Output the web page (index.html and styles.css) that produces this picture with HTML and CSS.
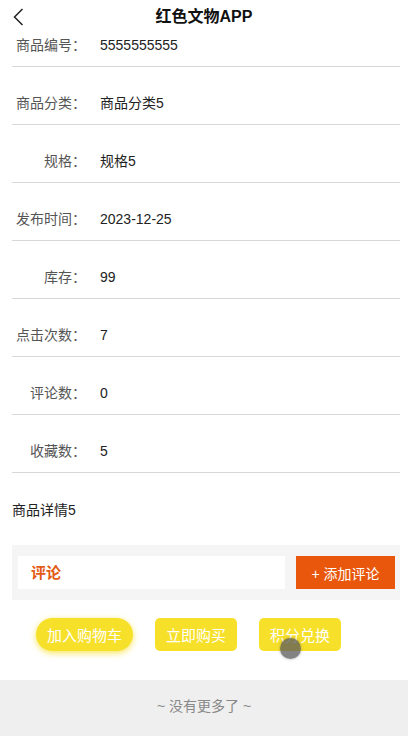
FILE: index.html
```html
<!DOCTYPE html>
<html lang="zh">
<head>
    <meta charset="UTF-8">
    <meta name="viewport" content="width=device-width, initial-scale=1.0">
    <title>红色文物APP</title>
    <link rel="stylesheet" href="styles.css">
</head>
<body>

    <div class="page">
        <div class="header">
            <svg class="back" width="12" height="18" viewBox="0 0 12 18">
                <path d="M9.5 1 L1.5 9 L9.5 17" fill="none" stroke="#222" stroke-width="1.5"/>
            </svg>
            <h1>红色文物APP</h1>
        </div>

        <div class="content">
            <div class="info-list">
                <div class="info-row"><span class="label">商品编号：</span><span class="value">5555555555</span></div>
                <div class="info-row"><span class="label">商品分类：</span><span class="value">商品分类5</span></div>
                <div class="info-row"><span class="label">规格：</span><span class="value">规格5</span></div>
                <div class="info-row"><span class="label">发布时间：</span><span class="value">2023-12-25</span></div>
                <div class="info-row"><span class="label">库存：</span><span class="value">99</span></div>
                <div class="info-row"><span class="label">点击次数：</span><span class="value">7</span></div>
                <div class="info-row"><span class="label">评论数：</span><span class="value">0</span></div>
                <div class="info-row"><span class="label">收藏数：</span><span class="value">5</span></div>
            </div>

            <div class="detail">商品详情5</div>

            <div class="comment-bar">
                <div class="comment-title">评论</div>
                <button class="add-comment">+ 添加评论</button>
            </div>

            <div class="actions">
                <button class="btn btn-cart">加入购物车</button>
                <button class="btn">立即购买</button>
                <button class="btn">积分兑换</button>
            </div>
        </div>

        <div class="footer">~ 没有更多了 ~</div>

        <div class="touch-dot"></div>
    </div>

</body>
</html>
```

FILE: styles.css
```css
* {
    margin: 0;
    padding: 0;
    box-sizing: border-box;
    font-family: "Liberation Sans", "Noto Sans CJK SC", sans-serif;
}

body {
    background: #fff;
    width: 408px;
    height: 736px;
    overflow: hidden;
}

.page {
    position: relative;
    height: 736px;
    display: flex;
    flex-direction: column;
    overflow: hidden;
}

.header {
    position: relative;
    z-index: 2;
    height: 34px;
    background: #fff;
    display: flex;
    align-items: center;
    justify-content: center;
    flex-shrink: 0;
}

.header .back {
    position: absolute;
    left: 13px;
    top: 8px;
}

.header h1 {
    font-size: 16px;
    font-weight: bold;
    color: #111;
    line-height: 34px;
}

.content {
    flex: 1;
    margin-top: -25px;
    padding: 0 8px 0 12px;
}

.info-row {
    display: flex;
    align-items: center;
    padding: 26px 0 11px;
    line-height: 20px;
    font-size: 14px;
    border-bottom: 1px solid #d8d8d8;
}

.label {
    width: 74px;
    text-align: right;
    color: #555;
    margin-right: 14px;
}

.value {
    color: #222;
}

.detail {
    font-size: 14px;
    color: #222;
    line-height: 20px;
    margin-top: 27px;
}

.comment-bar {
    display: flex;
    align-items: center;
    background: #f5f5f5;
    margin-top: 25px;
    padding: 11px 5px 11px 6px;
    height: 55px;
}

.comment-title {
    flex: 1;
    background: #fff;
    height: 33px;
    line-height: 33px;
    padding-left: 13px;
    color: #e35a14;
    font-weight: bold;
    font-size: 15px;
}

.add-comment {
    width: 99px;
    height: 33px;
    margin-left: 11px;
    border: none;
    background: #e8570c;
    color: #fff;
    font-size: 14px;
    cursor: pointer;
}

.actions {
    display: flex;
    gap: 22px;
    padding: 18px 0 0 24px;
}

.btn {
    height: 33px;
    padding: 0 11px;
    border: none;
    border-radius: 5px;
    background: #f7e02a;
    color: #fff;
    font-size: 15px;
    cursor: pointer;
}

.btn-cart {
    border-radius: 17px;
    box-shadow: 0 2px 6px rgba(247, 224, 42, 0.8);
}

.footer {
    height: 56px;
    line-height: 52px;
    background: #efefef;
    color: #888;
    text-align: center;
    font-size: 14px;
    flex-shrink: 0;
}

.touch-dot {
    position: absolute;
    left: 280px;
    top: 638px;
    width: 21px;
    height: 21px;
    border-radius: 50%;
    background: rgba(90, 90, 90, 0.75);
    box-shadow: 0 0 3px rgba(90, 90, 90, 0.5);
}
```
